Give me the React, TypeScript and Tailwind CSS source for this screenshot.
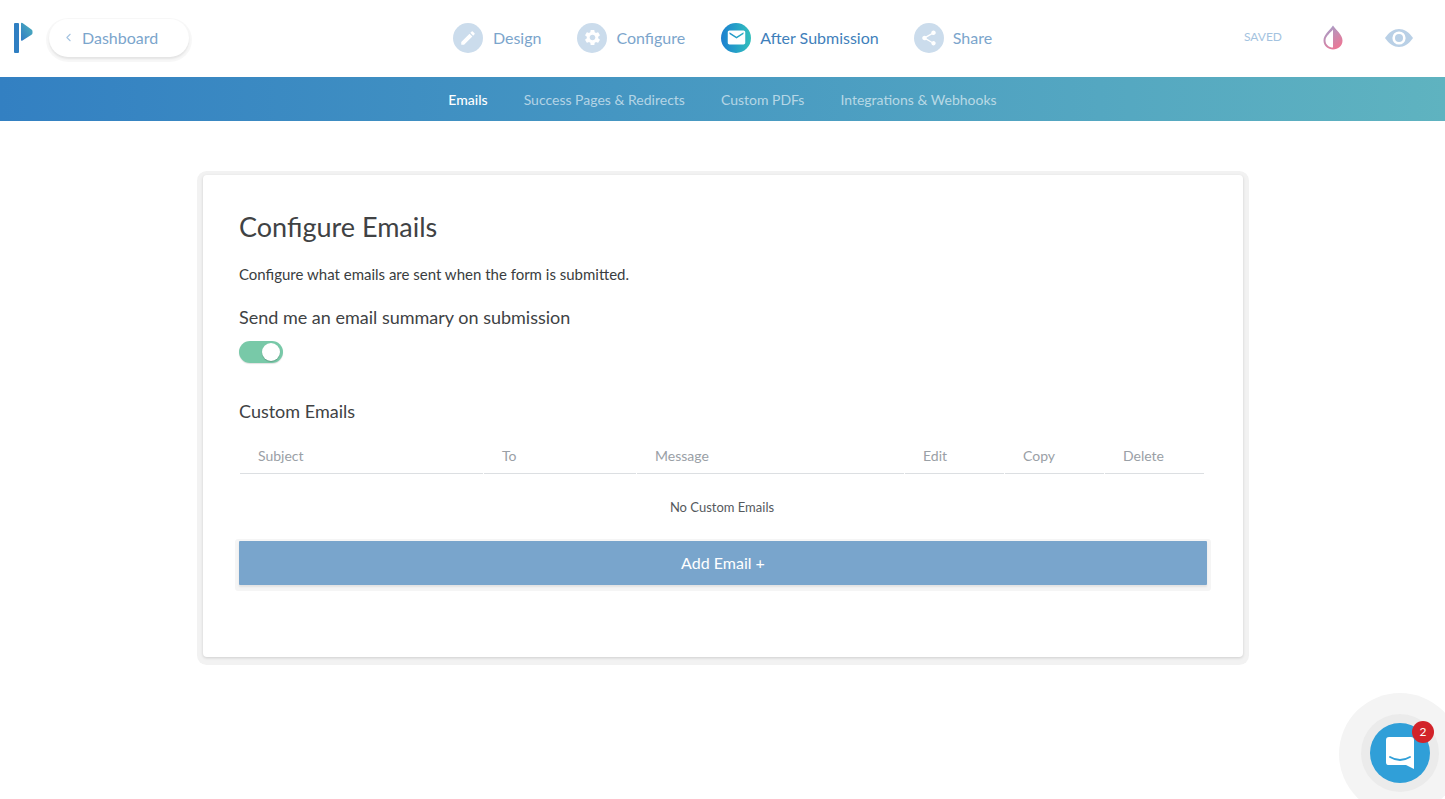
import { ChevronLeft } from "lucide-react";
import { MdEdit, MdEmail, MdSettings, MdShare } from "react-icons/md";

const columns = [
  { label: "Subject" },
  { label: "To" },
  { label: "Message" },
  { label: "Edit" },
  { label: "Copy" },
  { label: "Delete" },
];

function Logo() {
  return (
    <svg width="20" height="32" viewBox="0 0 20 32" className="block mt-[1px]">
      <defs>
        <linearGradient id="logo" x1="0" y1="1" x2="1" y2="0">
          <stop offset="0" stopColor="#2f7bc4" />
          <stop offset="1" stopColor="#4fb4bd" />
        </linearGradient>
      </defs>
      <rect x="1" y="1" width="5" height="30" rx="1" fill="#2f7fc2" />
      <path d="M8 1.5 Q8 0.5 9.5 1 L18.5 7.5 Q19.5 8.2 19.5 9.5 V11 Q19.5 12 18.5 12.8 L9.5 18.5 Q8 19.3 8 18 Z" fill="url(#logo)" />
    </svg>
  );
}

function NavItem({ label, active, icon, className }: { label: string; active?: boolean; icon: React.ReactNode; className?: string }) {
  return (
    <div className={`flex items-center ${className ?? ""}`}>
      <div
        className={
          active
            ? "w-[30px] h-[30px] rounded-full flex items-center justify-center bg-gradient-to-r from-[#1f7fd0] to-[#35c0bb]"
            : "w-[30px] h-[30px] rounded-full flex items-center justify-center bg-[#cbdcec]"
        }
      >
        {icon}
      </div>
      <span className={active ? "text-[16px] text-[#3f7fbb]" : "text-[16px] text-[#7ba5cc]"}>{label}</span>
    </div>
  );
}

function Drop() {
  return (
    <svg width="20" height="25" viewBox="0 0 20 25" className="block">
      <defs>
        <linearGradient id="drop" x1="0" y1="0" x2="0.6" y2="1">
          <stop offset="0" stopColor="#9ca3cf" />
          <stop offset="1" stopColor="#ea7897" />
        </linearGradient>
      </defs>
      <path d="M10 0.5 C7.5 4.5 0.5 9.5 0.5 15.5 C0.5 21 5 24.5 10 24.5 C15 24.5 19.5 21 19.5 15.5 C19.5 9.5 12.5 4.5 10 0.5 Z" fill="url(#drop)" />
      <path d="M10 4.5 C8 7.5 2.5 11 2.5 15.5 C2.5 19.7 6 22.6 10 22.6 Z" fill="#ffffff" />
    </svg>
  );
}

function EyeIcon() {
  return (
    <svg width="28" height="18" viewBox="0 0 28 18" className="block">
      <path d="M0 9 C4 3 9 0 14 0 C19 0 24 3 28 9 C24 15 19 18 14 18 C9 18 4 15 0 9 Z" fill="#b9d0e6" />
      <circle cx="14" cy="9" r="6.6" fill="#ffffff" />
      <circle cx="14" cy="9" r="4" fill="#b9d0e6" />
    </svg>
  );
}

function Header() {
  return (
    <div className="h-[77px] pb-[2px] grid grid-cols-[1fr_auto_1fr] items-center bg-white">
      <div className="flex items-center pl-[13px]">
        <Logo />
        <div className="ml-[16px] w-[140px] h-[38px] rounded-full bg-white flex items-center pl-[13px] gap-[7px] shadow-[0_2px_2px_rgba(0,0,0,0.08),0_2px_0_3px_rgba(0,0,0,0.03)]">
          <ChevronLeft size={13} className="text-[#a4c3e0]" />
          <span className="text-[16px] text-[#7ba5cc]">Dashboard</span>
        </div>
      </div>
      <div className="flex items-center">
        <NavItem className="gap-[10px]" label="Design" icon={<MdEdit size={18} className="text-white" />} />
        <NavItem className="ml-[36px] gap-[9px]" label="Configure" icon={<MdSettings size={19} className="text-white" />} />
        <NavItem className="ml-[36px] gap-[9px]" label="After Submission" active icon={<MdEmail size={21} className="text-white" />} />
        <NavItem className="ml-[35px] gap-[9px]" label="Share" icon={<MdShare size={18} className="text-white" />} />
      </div>
      <div className="flex items-center justify-end pr-[32px]">
        <span className="text-[12px] text-[#a4c3e0] mr-[41px] -mt-[1px]">SAVED</span>
        <Drop />
        <div className="ml-[42px]">
          <EyeIcon />
        </div>
      </div>
    </div>
  );
}

function SubNav() {
  return (
    <div className="h-[44px] flex items-center justify-center gap-[36px] text-[14px] bg-gradient-to-r from-[#3380c2] to-[#5fb3c0]">
      <span className="text-white font-medium">Emails</span>
      <span className="text-white/60">Success Pages &amp; Redirects</span>
      <span className="text-white/60">Custom PDFs</span>
      <span className="text-white/60">Integrations &amp; Webhooks</span>
    </div>
  );
}

function ChatWidget() {
  return (
    <div className="absolute left-[1339px] top-[693px] w-[122px] h-[122px] rounded-full bg-[#f4f4f4] flex items-center justify-center">
      <div className="-mt-[2px] w-[78px] h-[78px] rounded-full bg-[#ebebeb] flex items-center justify-center">
        <div className="relative w-[60px] h-[60px] rounded-full bg-[#309fd8] flex items-center justify-center">
          <svg width="30" height="34" viewBox="0 0 30 34">
            <path d="M4 1 H26 Q29 1 29 4 V33 L21 29 H3 Q1 29 1 26 V4 Q1 1 4 1 Z" fill="#ffffff" />
            <path d="M5 21 Q15 27 25 21" fill="none" stroke="#309fd8" strokeWidth="1.8" strokeLinecap="round" />
          </svg>
          <div className="absolute -top-[2px] -right-[4px] w-[22px] h-[22px] rounded-full bg-[#d2232a] flex items-center justify-center text-white text-[12px]">
            2
          </div>
        </div>
      </div>
    </div>
  );
}

export default function App() {
  return (
    <div className="relative w-[1445px] h-[799px] overflow-hidden bg-white font-['Lato',sans-serif]">
      <Header />
      <SubNav />
      <div className="pt-[54px] pl-[203px]">
        <div className="w-[1040px] h-[482px] rounded-[4px] bg-white px-[36px] pt-[34px] shadow-[0_1px_3px_rgba(0,0,0,0.15),0_2px_0_6px_#f2f2f2]">
          <h1 className="text-[27px] leading-[36px] text-[#404244]">Configure Emails</h1>
          <p className="mt-[19px] text-[15px] leading-[20px] text-[#3a3d40]">
            Configure what emails are sent when the form is submitted.
          </p>
          <h2 className="mt-[21px] text-[18px] leading-[24px] text-[#404244]">Send me an email summary on submission</h2>
          <div className="mt-[12px] w-[44px] h-[22px] rounded-full bg-[#78c9a8] flex items-center justify-end pr-[3px] shadow-[0_1px_1px_rgba(0,0,0,0.12)]">
            <div className="w-[18px] h-[18px] rounded-full bg-white shadow-[0_1px_1px_rgba(0,0,0,0.2)]" />
          </div>
          <h3 className="mt-[36px] text-[18px] leading-[24px] text-[#404244]">Custom Emails</h3>
          <div className="mt-[15px] ml-[1px] w-[964px] grid grid-cols-[243px_152px_267px_99px_99px_99px] gap-x-px h-[36px]">
            {columns.map((col) => (
              <div
                key={col.label}
                className="pl-[18px] flex items-center text-[14px] text-[#9aa0a6] border-b border-[#dcdfe2]"
              >
                {col.label}
              </div>
            ))}
          </div>
          <div className="h-[67px] w-[966px] flex items-center justify-center text-[13px] text-[#55595d]">
            No Custom Emails
          </div>
          <button className="w-[968px] h-[44px] block rounded-[1px] bg-[#79a5cc] text-white text-[16px] shadow-[0_2px_2px_rgba(0,0,0,0.08),0_2px_0_4px_#f5f5f5]">
            Add Email +
          </button>
        </div>
      </div>
      <ChatWidget />
    </div>
  );
}
